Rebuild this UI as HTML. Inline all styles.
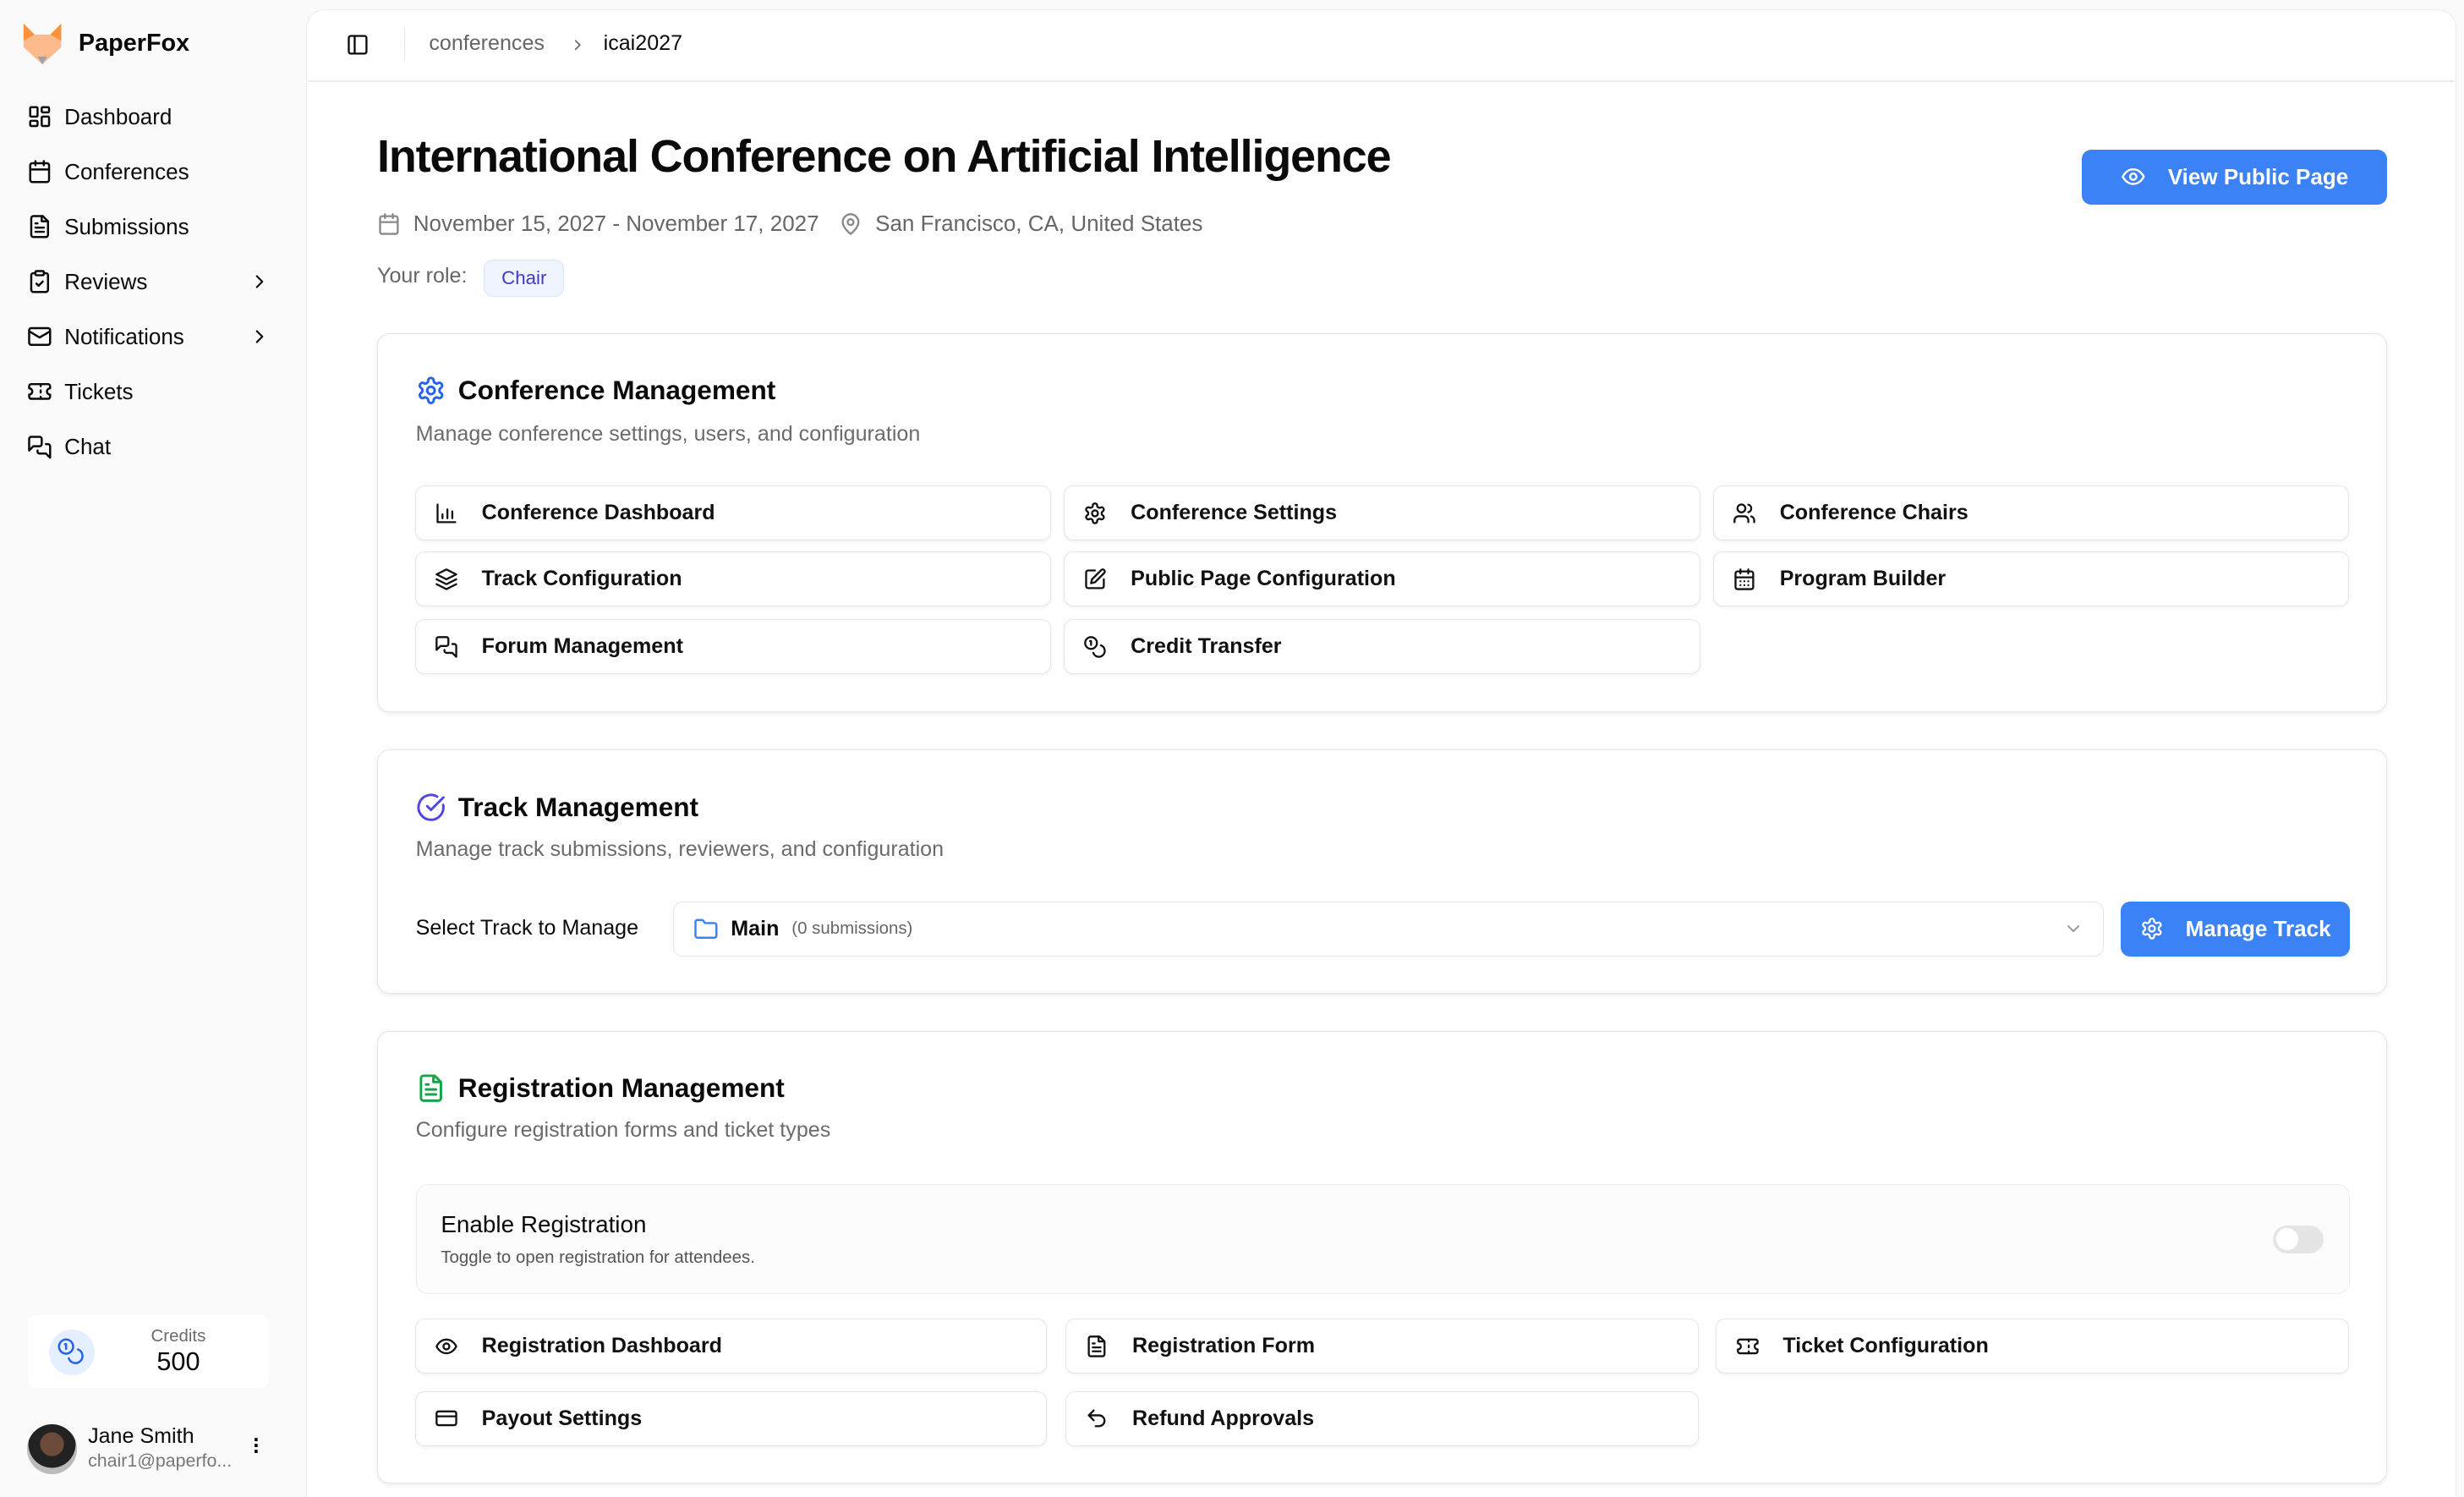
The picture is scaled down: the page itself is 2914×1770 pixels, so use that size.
<!DOCTYPE html>
<html><head><meta charset="utf-8"><style>
*{box-sizing:border-box;margin:0;padding:0}
html,body{width:2914px;height:1770px;overflow:hidden;background:#fafafa}
#r{zoom:1.8584;width:1568px;height:952px;position:relative;font-family:"Liberation Sans",sans-serif;color:#0a0a0a;background:#fafafa}
.a{position:absolute}
svg{fill:none;stroke:currentColor;stroke-width:2;stroke-linecap:round;stroke-linejoin:round}
.nav{position:absolute;left:17px;display:flex;align-items:center;font-size:14px;gap:8px;width:155px}
.nav svg{width:16px;height:16px}
.nav .ch{margin-left:auto;width:14px;height:14px}
.main{position:absolute;left:195px;top:6px;width:1368px;height:960px;background:#fff;border:1px solid #ececec;border-radius:12px 12px 0 0}
.card{position:absolute;left:240px;width:1279px;background:#fff;border:1px solid #e5e5e5;border-radius:8px;box-shadow:0 1px 3px rgba(0,0,0,.08)}
.ct{position:absolute;left:24px;display:flex;align-items:center;gap:8px;font-size:17px;font-weight:bold}
.ct svg{width:19px;height:19px}
.cs{position:absolute;left:24px;font-size:13.5px;color:#6b6b6b}
.it{position:absolute;height:35px;border:1px solid #e5e5e5;border-radius:6px;box-shadow:0 1px 2px rgba(0,0,0,.05);display:flex;align-items:center;padding-left:12px;gap:15px;font-size:13.5px;font-weight:bold;color:#111}
.it svg{width:15px;height:15px}
</style></head><body><div id="r">
<svg style="display:none"><defs><g id="gear"><path d="M12.22 2h-.44a2 2 0 0 0-2 2v.18a2 2 0 0 1-1 1.73l-.43.25a2 2 0 0 1-2 0l-.15-.08a2 2 0 0 0-2.73.73l-.22.38a2 2 0 0 0 .73 2.73l.15.1a2 2 0 0 1 1 1.72v.51a2 2 0 0 1-1 1.74l-.15.09a2 2 0 0 0-.73 2.73l.22.38a2 2 0 0 0 2.73.73l.15-.08a2 2 0 0 1 2 0l.43.25a2 2 0 0 1 1 1.73V20a2 2 0 0 0 2 2h.44a2 2 0 0 0 2-2v-.18a2 2 0 0 1 1-1.73l.43-.25a2 2 0 0 1 2 0l.15.08a2 2 0 0 0 2.73-.73l.22-.39a2 2 0 0 0-.73-2.73l-.15-.08a2 2 0 0 1-1-1.74v-.5a2 2 0 0 1 1-1.74l.15-.09a2 2 0 0 0 .73-2.73l-.22-.38a2 2 0 0 0-2.73-.73l-.15.08a2 2 0 0 1-2 0l-.43-.25a2 2 0 0 1-1-1.73V4a2 2 0 0 0-2-2z"/><circle cx="12" cy="12" r="3"/></g></defs></svg>
<svg class="a" style="left:14px;top:14px;width:26px;height:28px;stroke:none" viewBox="0 0 26 28"><path d="M1 1 L8 8 L18 8 L25 1 L25 16 L13 27 L1 16Z" fill="#fdba8c"/><path d="M1 1 L8 8 L1 12Z M25 1 L18 8 L25 12Z" fill="#fb923c"/><path d="M10 22 L16 22 L13 27Z" fill="#9ca3af"/></svg>
<div class="a" style="left:50px;top:19px;font-size:15.5px;font-weight:bold">PaperFox</div>
<div class="nav" style="top:66px"><svg viewBox="0 0 24 24"><rect x="3" y="3" width="7" height="9" rx="1"/><rect x="14" y="3" width="7" height="5" rx="1"/><rect x="14" y="12" width="7" height="9" rx="1"/><rect x="3" y="16" width="7" height="5" rx="1"/></svg>Dashboard</div>
<div class="nav" style="top:101px"><svg viewBox="0 0 24 24"><rect x="3" y="4" width="18" height="18" rx="2"/><path d="M16 2v4M8 2v4M3 10h18"/></svg>Conferences</div>
<div class="nav" style="top:136px"><svg viewBox="0 0 24 24"><path d="M15 2H6a2 2 0 0 0-2 2v16a2 2 0 0 0 2 2h12a2 2 0 0 0 2-2V7z"/><path d="M14 2v5h5M16 13H8M16 17H8M10 9H8"/></svg>Submissions</div>
<div class="nav" style="top:171px"><svg viewBox="0 0 24 24"><rect x="8" y="2" width="8" height="4" rx="1"/><path d="M16 4h2a2 2 0 0 1 2 2v14a2 2 0 0 1-2 2H6a2 2 0 0 1-2-2V6a2 2 0 0 1 2-2h2"/><path d="m9 14 2 2 4-4"/></svg>Reviews<svg class="ch" viewBox="0 0 24 24"><path d="m9 18 6-6-6-6"/></svg></div>
<div class="nav" style="top:206px"><svg viewBox="0 0 24 24"><rect x="2" y="4" width="20" height="16" rx="2"/><path d="m22 7-10 6L2 7"/></svg>Notifications<svg class="ch" viewBox="0 0 24 24"><path d="m9 18 6-6-6-6"/></svg></div>
<div class="nav" style="top:241px"><svg viewBox="0 0 24 24"><path d="M2 9a3 3 0 0 1 0 6v2a2 2 0 0 0 2 2h16a2 2 0 0 0 2-2v-2a3 3 0 0 1 0-6V7a2 2 0 0 0-2-2H4a2 2 0 0 0-2 2Z"/><path d="M13 5v2M13 17v2M13 11v2"/></svg>Tickets</div>
<div class="nav" style="top:276px"><svg viewBox="0 0 24 24"><path d="M14 9a2 2 0 0 1-2 2H6l-4 4V4a2 2 0 0 1 2-2h8a2 2 0 0 1 2 2z"/><path d="M18 9h2a2 2 0 0 1 2 2v11l-4-4h-6a2 2 0 0 1-2-2v-1"/></svg>Chat</div>
<div class="a" style="left:18px;top:837px;width:153px;height:46px;background:#fff;border-radius:6px"></div>
<div class="a" style="left:31px;top:846px;width:29px;height:29px;border-radius:50%;background:#e6efff"></div>
<svg class="a" style="left:36px;top:851px;width:18px;height:18px;color:#2563eb;stroke-width:1.8" viewBox="0 0 24 24"><circle cx="8" cy="8" r="6"/><path d="M18.1 10.4A6 6 0 1 1 10.3 18M7 6h1v4"/></svg>
<div class="a" style="left:80px;top:844px;width:67px;text-align:center;font-size:11px;color:#6b6b6b">Credits</div>
<div class="a" style="left:80px;top:857px;width:67px;text-align:center;font-size:16.5px">500</div>
<div class="a" style="left:17px;top:906px;width:32px;height:32px;border-radius:50%;background:radial-gradient(circle at 50% 40%,#6b4a3a 0 30%,#222 31% 60%,#bbb 61%)"></div>
<div class="a" style="left:56px;top:906px;font-size:13.5px;font-weight:500">Jane Smith</div>
<div class="a" style="left:56px;top:923px;font-size:11.5px;color:#777">chair1@paperfo...</div>
<div class="a" style="left:161px;top:914px;font-size:14px;line-height:4px;font-weight:bold">·<br>·<br>·</div>
<div class="main"></div>
<div class="a" style="left:196px;top:51px;width:1366px;height:1px;background:#ececec"></div>
<svg class="a" style="left:220px;top:21px;width:15px;height:15px" viewBox="0 0 24 24"><rect x="3" y="3" width="18" height="18" rx="2"/><path d="M9 3v18"/></svg>
<div class="a" style="left:257px;top:18px;width:1px;height:20px;background:#e5e5e5"></div>
<div class="a" style="left:273px;top:20px;font-size:13.5px;color:#666">conferences</div>
<svg class="a" style="left:362px;top:23px;width:11px;height:11px;color:#666" viewBox="0 0 24 24"><path d="m9 18 6-6-6-6"/></svg>
<div class="a" style="left:384px;top:20px;font-size:13.5px">icai2027</div>
<div class="a" style="left:240px;top:83px;font-size:29px;font-weight:bold;letter-spacing:-.6px">International Conference on Artificial Intelligence</div>
<div class="a" style="left:1325px;top:95px;width:194px;height:35px;background:#3b82f6;border-radius:6px;color:#fff;font-size:14px;font-weight:bold;display:flex;align-items:center;justify-content:center;gap:14px"><svg style="width:16px;height:16px" viewBox="0 0 24 24"><path d="M2 12s3-7 10-7 10 7 10 7-3 7-10 7-10-7-10-7Z"/><circle cx="12" cy="12" r="3"/></svg>View Public Page</div>
<svg class="a" style="left:240px;top:135px;width:15px;height:15px;color:#888" viewBox="0 0 24 24"><rect x="3" y="4" width="18" height="18" rx="2"/><path d="M16 2v4M8 2v4M3 10h18"/></svg>
<div class="a" style="left:263px;top:134px;font-size:14px;color:#666">November 15, 2027 - November 17, 2027</div>
<svg class="a" style="left:534px;top:135px;width:15px;height:15px;color:#888" viewBox="0 0 24 24"><path d="M20 10c0 6-8 12-8 12s-8-6-8-12a8 8 0 0 1 16 0Z"/><circle cx="12" cy="10" r="3"/></svg>
<div class="a" style="left:557px;top:134px;font-size:14px;color:#666">San Francisco, CA, United States</div>
<div class="a" style="left:240px;top:168px;font-size:13.5px;color:#666">Your role:</div>
<div class="a" style="left:308px;top:165px;width:51px;height:24px;border:1px solid #dbe4fb;background:#eff4ff;border-radius:6px;color:#4338ca;font-size:12px;display:flex;align-items:center;justify-content:center">Chair</div>
<div class="card" style="top:212px;height:241px">
<div class="ct" style="top:26px"><svg viewBox="0 0 24 24" style="color:#2563eb"><use href="#gear"/></svg>Conference Management</div>
<div class="cs" style="top:56px">Manage conference settings, users, and configuration</div>
</div>
<div class="it" style="left:264px;top:309px;width:405px"><svg viewBox="0 0 24 24"><path d="M3 3v18h18M8 17v-4M13 17V8M18 17v-7"/></svg>Conference Dashboard</div>
<div class="it" style="left:677px;top:309px;width:405px"><svg viewBox="0 0 24 24"><use href="#gear"/></svg>Conference Settings</div>
<div class="it" style="left:1090px;top:309px;width:405px"><svg viewBox="0 0 24 24"><path d="M16 21v-2a4 4 0 0 0-4-4H6a4 4 0 0 0-4 4v2"/><circle cx="9" cy="7" r="4"/><path d="M22 21v-2a4 4 0 0 0-3-3.87M16 3.13a4 4 0 0 1 0 7.75"/></svg>Conference Chairs</div>
<div class="it" style="left:264px;top:351px;width:405px"><svg viewBox="0 0 24 24"><path d="m12 2 10 5-10 5L2 7z"/><path d="m2 12 10 5 10-5M2 17l10 5 10-5"/></svg>Track Configuration</div>
<div class="it" style="left:677px;top:351px;width:405px"><svg viewBox="0 0 24 24"><path d="M12 3H5a2 2 0 0 0-2 2v14a2 2 0 0 0 2 2h14a2 2 0 0 0 2-2v-7"/><path d="M18.4 2.6a2.1 2.1 0 0 1 3 3L12 15l-4 1 1-4Z"/></svg>Public Page Configuration</div>
<div class="it" style="left:1090px;top:351px;width:405px"><svg viewBox="0 0 24 24"><rect x="3" y="4" width="18" height="18" rx="2"/><path d="M16 2v4M8 2v4M3 10h18M8 14h.01M12 14h.01M16 14h.01M8 18h.01M12 18h.01M16 18h.01"/></svg>Program Builder</div>
<div class="it" style="left:264px;top:394px;width:405px"><svg viewBox="0 0 24 24"><path d="M14 9a2 2 0 0 1-2 2H6l-4 4V4a2 2 0 0 1 2-2h8a2 2 0 0 1 2 2z"/><path d="M18 9h2a2 2 0 0 1 2 2v11l-4-4h-6a2 2 0 0 1-2-2v-1"/></svg>Forum Management</div>
<div class="it" style="left:677px;top:394px;width:405px"><svg viewBox="0 0 24 24"><circle cx="8" cy="8" r="6"/><path d="M18.1 10.4A6 6 0 1 1 10.3 18M7 6h1v4"/></svg>Credit Transfer</div>
<div class="card" style="top:477px;height:155px">
<div class="ct" style="top:26px"><svg viewBox="0 0 24 24" style="color:#4f46e5"><path d="M21.8 10A10 10 0 1 1 17 3.3"/><path d="m9 11 3 3L22 4"/></svg>Track Management</div>
<div class="cs" style="top:55px">Manage track submissions, reviewers, and configuration</div>
<div class="a" style="left:24px;top:105px;font-size:13.5px;font-weight:500">Select Track to Manage</div>
<div class="a" style="left:188px;top:96px;width:910px;height:35px;border:1px solid #e5e5e5;border-radius:6px;display:flex;align-items:center;padding-left:12px;gap:8px"><svg style="width:16px;height:16px;color:#3b82f6" viewBox="0 0 24 24"><path d="M20 20a2 2 0 0 0 2-2V8a2 2 0 0 0-2-2h-7.9a2 2 0 0 1-1.7-.9l-.8-1.2A2 2 0 0 0 7.9 3H4a2 2 0 0 0-2 2v13a2 2 0 0 0 2 2Z"/></svg><span style="font-size:13.5px;font-weight:bold">Main</span><span style="font-size:11px;color:#666">(0 submissions)</span><svg style="width:13px;height:13px;color:#999;margin-left:auto;margin-right:12px" viewBox="0 0 24 24"><path d="m6 9 6 6 6-6"/></svg></div>
<div class="a" style="left:1109px;top:96px;width:146px;height:35px;background:#3b82f6;border-radius:6px;color:#fff;font-size:14px;font-weight:bold;display:flex;align-items:center;justify-content:center;gap:14px"><svg style="width:15px;height:15px" viewBox="0 0 24 24"><use href="#gear"/></svg>Manage Track</div>
</div>
<div class="card" style="top:656px;height:288px">
<div class="ct" style="top:26px"><svg viewBox="0 0 24 24" style="color:#16a34a"><path d="M15 2H6a2 2 0 0 0-2 2v16a2 2 0 0 0 2 2h12a2 2 0 0 0 2-2V7z"/><path d="M14 2v5h5M16 13H8M16 17H8M10 9H8"/></svg>Registration Management</div>
<div class="cs" style="top:55px">Configure registration forms and ticket types</div>
<div class="a" style="left:24px;top:97px;width:1231px;height:70px;border:1px solid #ececec;border-radius:8px;background:#fcfcfc"></div>
<div class="a" style="left:40px;top:114px;font-size:15px;font-weight:500">Enable Registration</div>
<div class="a" style="left:40px;top:137px;font-size:11px;color:#555">Toggle to open registration for attendees.</div>
<div class="a" style="left:1206px;top:123px;width:32px;height:18px;border-radius:9px;background:#e5e5e5"><div style="margin:2px;width:14px;height:14px;border-radius:50%;background:#fff"></div></div>
</div>
<div class="it" style="left:264px;top:839px;width:402px"><svg viewBox="0 0 24 24"><path d="M2 12s3-7 10-7 10 7 10 7-3 7-10 7-10-7-10-7Z"/><circle cx="12" cy="12" r="3"/></svg>Registration Dashboard</div>
<div class="it" style="left:678px;top:839px;width:403px"><svg viewBox="0 0 24 24"><path d="M15 2H6a2 2 0 0 0-2 2v16a2 2 0 0 0 2 2h12a2 2 0 0 0 2-2V7z"/><path d="M14 2v5h5M16 13H8M16 17H8M10 9H8"/></svg>Registration Form</div>
<div class="it" style="left:1092px;top:839px;width:403px"><svg viewBox="0 0 24 24"><path d="M2 9a3 3 0 0 1 0 6v2a2 2 0 0 0 2 2h16a2 2 0 0 0 2-2v-2a3 3 0 0 1 0-6V7a2 2 0 0 0-2-2H4a2 2 0 0 0-2 2Z"/><path d="M13 5v2M13 17v2M13 11v2"/></svg>Ticket Configuration</div>
<div class="it" style="left:264px;top:885px;width:402px"><svg viewBox="0 0 24 24"><rect x="2" y="5" width="20" height="14" rx="2"/><path d="M2 10h20"/></svg>Payout Settings</div>
<div class="it" style="left:678px;top:885px;width:403px"><svg viewBox="0 0 24 24"><path d="M9 14 4 9l5-5"/><path d="M4 9h10.5a5.5 5.5 0 0 1 0 11H11"/></svg>Refund Approvals</div>
</div></body></html>
